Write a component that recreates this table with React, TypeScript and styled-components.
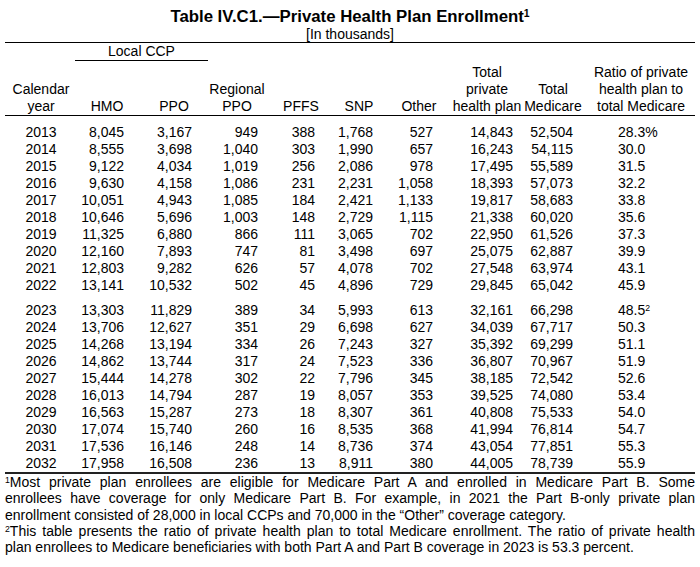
import * as React from "react";
import styled, { createGlobalStyle } from "styled-components";

// styled components
const GlobalStyle = createGlobalStyle`
body {
  margin: 0;
  background-color: #ffffff;
  color: #000000;
  font-family: "Liberation Sans", Arial, sans-serif;
}
`;

const COLS = "72px 54px 68px 66px 57px 58px 60px 80px 60px 115px";

const Page = styled.main`
  width: 690px;
  padding: 7px 5px 0;
`;

const Title = styled.h1`
  margin: 0;
  font-size: 16.8px;
  line-height: 19px;
  font-weight: bold;
  text-align: center;
`;

const Subtitle = styled.div`
  font-size: 14px;
  line-height: 16px;
  text-align: center;
`;

const Sup = styled.sup`
  font-size: 0.62em;
  line-height: 0;
  vertical-align: 0.45em;
`;

const Head = styled.div`
  display: grid;
  grid-template-columns: ${COLS};
  border-top: 1px solid #000;
  border-bottom: 1px solid #000;
  font-size: 14px;
  line-height: 17px;
`;

const Group = styled.div`
  grid-column: 2 / 4;
  text-align: center;
  border-bottom: 1px solid #000;
  margin: 0 -9px 3px -2px;
`;

const HeadCell = styled.div<{ $shift?: number }>`
  grid-row: 2;
  align-self: end;
  justify-self: center;
  white-space: nowrap;
  text-align: center;
  padding-left: ${(p) => Math.max(0, 2 * (p.$shift ?? 0))}px;
  padding-right: ${(p) => Math.max(0, -2 * (p.$shift ?? 0))}px;
`;

const Body = styled.div`
  padding-top: 8px;
  border-bottom: 2px solid #222;
  font-size: 14px;
  line-height: 17px;
`;

const Row = styled.div<{ $break?: boolean }>`
  display: grid;
  grid-template-columns: ${COLS};
  margin-top: ${(p) => (p.$break ? "8px" : "0")};
`;

const Year = styled.div`
  text-align: center;
`;

const Num = styled.div`
  text-align: right;
  padding-right: 7px;
`;

const Ratio = styled.div`
  text-align: left;
  padding-left: 38px;
`;

const Notes = styled.div`
  font-size: 14px;
  line-height: 16.3px;
`;

const Line = styled.div<{ $justify?: boolean }>`
  text-align: ${(p) => (p.$justify ? "justify" : "left")};
  text-align-last: ${(p) => (p.$justify ? "justify" : "left")};
  white-space: nowrap;
`;

// data
const headers: { lines: string[]; shift: number }[] = [
  { lines: ["Calendar", "year"], shift: 0 },
  { lines: ["HMO"], shift: 3 },
  { lines: ["PPO"], shift: 9 },
  { lines: ["Regional", "PPO"], shift: 5 },
  { lines: ["PFFS"], shift: 7.5 },
  { lines: ["SNP"], shift: 8 },
  { lines: ["Other"], shift: 9 },
  { lines: ["Total", "private", "health plan"], shift: 7 },
  { lines: ["Total", "Medicare"], shift: 3 },
  { lines: ["Ratio of private", "health plan to", "total Medicare"], shift: 3.5 },
];

const rows: string[][] = [
  ["2013", "8,045", "3,167", "949", "388", "1,768", "527", "14,843", "52,504", "28.3%"],
  ["2014", "8,555", "3,698", "1,040", "303", "1,990", "657", "16,243", "54,115", "30.0"],
  ["2015", "9,122", "4,034", "1,019", "256", "2,086", "978", "17,495", "55,589", "31.5"],
  ["2016", "9,630", "4,158", "1,086", "231", "2,231", "1,058", "18,393", "57,073", "32.2"],
  ["2017", "10,051", "4,943", "1,085", "184", "2,421", "1,133", "19,817", "58,683", "33.8"],
  ["2018", "10,646", "5,696", "1,003", "148", "2,729", "1,115", "21,338", "60,020", "35.6"],
  ["2019", "11,325", "6,880", "866", "111", "3,065", "702", "22,950", "61,526", "37.3"],
  ["2020", "12,160", "7,893", "747", "81", "3,498", "697", "25,075", "62,887", "39.9"],
  ["2021", "12,803", "9,282", "626", "57", "4,078", "702", "27,548", "63,974", "43.1"],
  ["2022", "13,141", "10,532", "502", "45", "4,896", "729", "29,845", "65,042", "45.9"],
  ["2023", "13,303", "11,829", "389", "34", "5,993", "613", "32,161", "66,298", "48.5"],
  ["2024", "13,706", "12,627", "351", "29", "6,698", "627", "34,039", "67,717", "50.3"],
  ["2025", "14,268", "13,194", "334", "26", "7,243", "327", "35,392", "69,299", "51.1"],
  ["2026", "14,862", "13,744", "317", "24", "7,523", "336", "36,807", "70,967", "51.9"],
  ["2027", "15,444", "14,278", "302", "22", "7,796", "345", "38,185", "72,542", "52.6"],
  ["2028", "16,013", "14,794", "287", "19", "8,057", "353", "39,525", "74,080", "53.4"],
  ["2029", "16,563", "15,287", "273", "18", "8,307", "361", "40,808", "75,533", "54.0"],
  ["2030", "17,074", "15,740", "260", "16", "8,535", "368", "41,994", "76,814", "54.7"],
  ["2031", "17,536", "16,146", "248", "14", "8,736", "374", "43,054", "77,851", "55.3"],
  ["2032", "17,958", "16,508", "236", "13", "8,911", "380", "44,005", "78,739", "55.9"],
];

// components
const DataRow = ({ cells }: { cells: string[] }) => {
  const [year, ...nums] = cells;
  const ratio = nums.pop() as string;
  return (
    <Row $break={year === "2023"}>
      <Year>{year}</Year>
      {nums.map((n, i) => (
        <Num key={i}>{n}</Num>
      ))}
      <Ratio>
        {ratio}
        {year === "2023" && <Sup>2</Sup>}
      </Ratio>
    </Row>
  );
};

const App = () => {
  return (
    <React.Fragment>
      <GlobalStyle />
      <Page>
        <Title>
          Table IV.C1.—Private Health Plan Enrollment<Sup>1</Sup>
        </Title>
        <Subtitle>[In thousands]</Subtitle>
        <Head>
          <Group>Local CCP</Group>
          {headers.map((h, i) => (
            <HeadCell key={i} $shift={h.shift} style={{ gridColumn: i + 1 }}>
              {h.lines.map((l, j) => (
                <div key={j}>{l}</div>
              ))}
            </HeadCell>
          ))}
        </Head>
        <Body>
          {rows.map((r) => (
            <DataRow key={r[0]} cells={r} />
          ))}
        </Body>
        <Notes>
          <Line $justify>
            <Sup>1</Sup>Most private plan enrollees are eligible for Medicare Part A and enrolled in Medicare Part B. Some
          </Line>
          <Line $justify>
            enrollees have coverage for only Medicare Part B. For example, in 2021 the Part B-only private plan
          </Line>
          <Line>
            enrollment consisted of 28,000 in local CCPs and 70,000 in the “Other” coverage category.
          </Line>
          <Line $justify>
            <Sup>2</Sup>This table presents the ratio of private health plan to total Medicare enrollment. The ratio of private health
          </Line>
          <Line>
            plan enrollees to Medicare beneficiaries with both Part A and Part B coverage in 2023 is 53.3 percent.
          </Line>
        </Notes>
      </Page>
    </React.Fragment>
  );
};

export default App;
